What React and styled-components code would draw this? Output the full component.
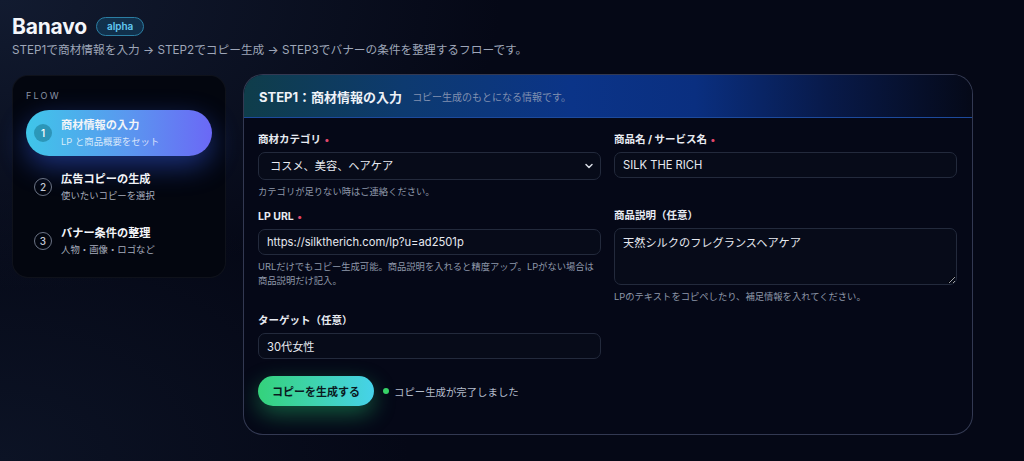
import styled, { createGlobalStyle } from "styled-components";
import { ChevronDown } from "lucide-react";

const GlobalStyle = createGlobalStyle`
  * { box-sizing: border-box; }
  html, body { margin: 0; height: 100%; }
  body {
    font-family: Inter, "Noto Sans CJK JP", sans-serif;
    color: #e8ebf2;
    background: #050816;
    overflow: hidden;
  }
`;

const steps = [
  { no: 1, title: "商材情報の入力", sub: "LP と商品概要をセット" },
  { no: 2, title: "広告コピーの生成", sub: "使いたいコピーを選択" },
  { no: 3, title: "バナー条件の整理", sub: "人物・画像・ロゴなど" },
];

const App = () => {
  return (
    <>
      <GlobalStyle />
      <Page>
        <TitleRow>
          <Brand>Banavo</Brand>
          <Badge>alpha</Badge>
        </TitleRow>
        <Lead>
          STEP1で商材情報を入力 → STEP2でコピー生成 → STEP3でバナーの条件を整理するフローです。
        </Lead>

        <Layout>
          <Sidebar>
            <FlowLabel>FLOW</FlowLabel>
            <StepList>
              {steps.map((s) => (
                <StepItem key={s.no} $active={s.no === 1}>
                  <StepNo $active={s.no === 1}>{s.no}</StepNo>
                  <StepText>
                    <StepTitle>{s.title}</StepTitle>
                    <StepSub $active={s.no === 1}>{s.sub}</StepSub>
                  </StepText>
                </StepItem>
              ))}
            </StepList>
          </Sidebar>

          <Card>
            <CardHeader>
              <CardTitle>STEP1：商材情報の入力</CardTitle>
              <CardSub>コピー生成のもとになる情報です。</CardSub>
            </CardHeader>
            <CardBody>
              <FormGrid>
                <Field>
                  <Label>
                    商材カテゴリ <Required>•</Required>
                  </Label>
                  <SelectWrap>
                    <Select defaultValue="cosme">
                      <option value="cosme">コスメ、美容、ヘアケア</option>
                    </Select>
                    <Chevron>
                      <ChevronDown size={12} strokeWidth={3} />
                    </Chevron>
                  </SelectWrap>
                  <Help>カテゴリが足りない時はご連絡ください。</Help>
                </Field>

                <Field>
                  <Label>
                    商品名 / サービス名 <Required>•</Required>
                  </Label>
                  <Input defaultValue="SILK THE RICH" />
                </Field>

                <Field>
                  <Label>
                    LP URL <Required>•</Required>
                  </Label>
                  <Input defaultValue="https://silktherich.com/lp?u=ad2501p" />
                  <Help>
                    URLだけでもコピー生成可能。商品説明を入れると精度アップ。LPがない場合は商品説明だけ記入。
                  </Help>
                </Field>

                <Field>
                  <Label>商品説明（任意）</Label>
                  <TextArea defaultValue="天然シルクのフレグランスヘアケア" />
                  <Help>LPのテキストをコピペしたり、補足情報を入れてください。</Help>
                </Field>

                <Field>
                  <Label>ターゲット（任意）</Label>
                  <Input defaultValue="30代女性" />
                </Field>
              </FormGrid>

              <Actions>
                <GenerateButton type="button">コピーを生成する</GenerateButton>
                <Status>
                  <Dot />
                  コピー生成が完了しました
                </Status>
              </Actions>
            </CardBody>
          </Card>
        </Layout>
      </Page>
    </>
  );
};

const Page = styled.div`
  min-height: 100vh;
  padding: 12px 12px 0;
  background:
    radial-gradient(ellipse 70% 90% at 0% 0%, #121b30 0%, rgba(18, 27, 48, 0) 70%),
    radial-gradient(ellipse 40% 60% at 0% 100%, #0c1325 0%, rgba(12, 19, 37, 0) 100%),
    #050816;
`;

const TitleRow = styled.div`
  display: flex;
  align-items: center;
  gap: 9px;
  height: 28px;
`;

const Brand = styled.h1`
  margin: 0;
  font-size: 21px;
  font-weight: 700;
  color: #f4f6fa;
  letter-spacing: -0.2px;
`;

const Badge = styled.span`
  display: inline-flex;
  align-items: center;
  height: 19px;
  padding: 0 10px;
  border-radius: 10px;
  border: 1px solid #2b7ea3;
  background: rgba(24, 96, 140, 0.35);
  color: #62c9f2;
  font-size: 10px;
  font-weight: 600;
`;

const Lead = styled.p`
  margin: 2px 0 0;
  font-size: 11.7px;
  line-height: 16px;
  color: #9ea6b8;
`;

const Layout = styled.div`
  display: grid;
  grid-template-columns: 214px 730px;
  column-gap: 17px;
  align-items: start;
  margin-top: 16px;
`;

const Sidebar = styled.aside`
  margin-top: 1px;
  padding: 14px 13px 13px;
  border-radius: 16px;
  background: #03060f;
  border: 1px solid rgba(255, 255, 255, 0.05);
`;

const FlowLabel = styled.div`
  font-size: 9px;
  line-height: 12px;
  letter-spacing: 2.2px;
  color: #8b93a5;
  margin-bottom: 8px;
`;

const StepList = styled.div`
  display: flex;
  flex-direction: column;
  gap: 8px;
`;

const StepItem = styled.div`
  display: flex;
  align-items: center;
  gap: 9px;
  height: 46px;
  padding: 0 8px;
  border-radius: 23px;
  background: ${(p) =>
    p.$active ? "linear-gradient(90deg, #3fc6e9 0%, #5a97ef 55%, #6b68f6 100%)" : "transparent"};
  box-shadow: ${(p) =>
    p.$active ? "0 10px 28px rgba(55, 100, 255, 0.45)" : "none"};
`;

const StepNo = styled.span`
  display: inline-flex;
  align-items: center;
  justify-content: center;
  width: 18px;
  height: 18px;
  border-radius: 50%;
  font-size: 10px;
  font-weight: 500;
  flex: none;
  color: ${(p) => (p.$active ? "#ffffff" : "#c5cad6")};
  background: ${(p) => (p.$active ? "rgba(10, 90, 110, 0.4)" : "transparent")};
  border: ${(p) => (p.$active ? "none" : "1px solid #6b7385")};
`;

const StepText = styled.div`
  display: flex;
  flex-direction: column;
  gap: 2px;
`;

const StepTitle = styled.span`
  font-size: 11.2px;
  line-height: 15px;
  font-weight: 700;
  color: #f2f4f8;
`;

const StepSub = styled.span`
  font-size: 9.4px;
  line-height: 13px;
  color: ${(p) => (p.$active ? "rgba(255, 255, 255, 0.78)" : "#a6adbd")};
`;

const Card = styled.section`
  border-radius: 20px;
  border: 1px solid rgba(125, 140, 180, 0.38);
  background: #050817;
  overflow: hidden;
`;

const CardHeader = styled.header`
  display: flex;
  align-items: center;
  gap: 10px;
  height: 43px;
  padding: 0 15px;
  background: linear-gradient(
    90deg,
    #0f3d4a 0%,
    #0d3a70 22%,
    #0b3488 45%,
    #0a2f80 62%,
    #081a4a 80%,
    #050918 100%
  );
  border-bottom: 1px solid #1d4a9c;
`;

const CardTitle = styled.h2`
  margin: 0;
  font-size: 13px;
  font-weight: 700;
  color: #eef2f8;
`;

const CardSub = styled.span`
  font-size: 10px;
  color: #8090b0;
`;

const CardBody = styled.div`
  padding: 14px 15px 28px 14px;
`;

const FormGrid = styled.div`
  display: grid;
  grid-template-columns: 1fr 1fr;
  column-gap: 13px;
  row-gap: 10px;
  align-items: start;
`;

const Field = styled.div`
  display: flex;
  flex-direction: column;
`;

const Label = styled.label`
  font-size: 10.5px;
  line-height: 14px;
  font-weight: 700;
  color: #e8ebf2;
  margin-bottom: 5px;
`;

const Required = styled.span`
  color: #e2476b;
  font-size: 10px;
  margin-left: 1px;
`;

const fieldBase = `
  width: 100%;
  border: 1px solid #232a3c;
  border-radius: 7px;
  background: #070b19;
  color: #e6e9f0;
  font-family: Inter, "Noto Sans CJK JP", sans-serif;
  font-size: 11.2px;
  outline: none;
`;

const Input = styled.input`
  ${fieldBase}
  height: 26px;
  padding: 0 8px;
`;

const SelectWrap = styled.div`
  position: relative;
`;

const Select = styled.select`
  ${fieldBase}
  appearance: none;
  height: 28px;
  padding: 0 24px 0 11px;
`;

const Chevron = styled.span`
  position: absolute;
  right: 6px;
  top: 8px;
  color: #d6dae3;
  display: flex;
  pointer-events: none;
`;

const TextArea = styled.textarea`
  ${fieldBase}
  height: 57px;
  padding: 7px 8px;
  line-height: 15px;
  resize: vertical;
`;

const Help = styled.p`
  margin: 5px 0 0;
  font-size: 9.3px;
  line-height: 14px;
  color: #8f98aa;
`;

const Actions = styled.div`
  display: flex;
  align-items: center;
  gap: 9px;
  margin-top: 17px;
`;

const GenerateButton = styled.button`
  height: 30px;
  padding: 0 14px;
  border: none;
  border-radius: 15px;
  background: linear-gradient(90deg, #34d27b 0%, #3fd3b0 50%, #46d2ea 100%);
  box-shadow: 0 8px 22px rgba(40, 210, 120, 0.4);
  color: #0a1a1f;
  font-family: Inter, "Noto Sans CJK JP", sans-serif;
  font-size: 11px;
  font-weight: 700;
  cursor: pointer;
`;

const Status = styled.span`
  display: inline-flex;
  align-items: center;
  gap: 5px;
  font-size: 10.4px;
  color: #b4bccb;
`;

const Dot = styled.span`
  width: 6px;
  height: 6px;
  border-radius: 50%;
  background: #37d267;
`;

export default App;
